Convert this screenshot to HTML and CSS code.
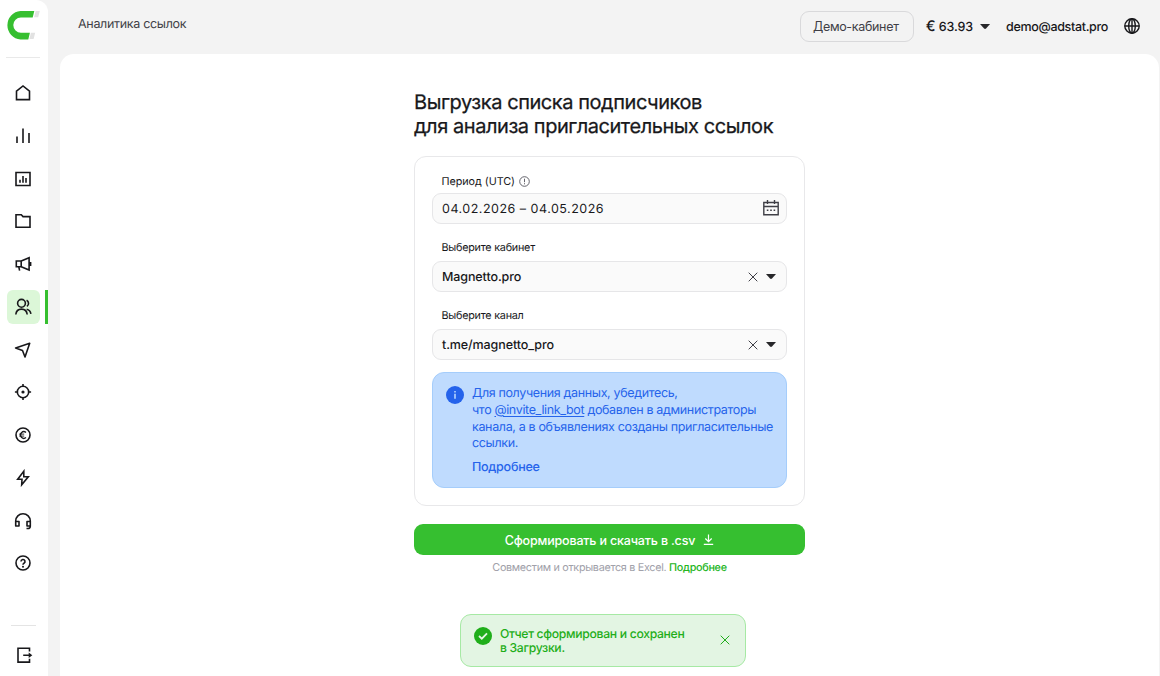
FILE: index.html
```html
<!DOCTYPE html>
<html lang="ru">
<head>
    <meta charset="UTF-8">
    <meta name="viewport" content="width=device-width, initial-scale=1.0">
    <title>Аналитика ссылок</title>
    <link rel="stylesheet" href="styles.css">
</head>
<body>
<div class="layout">
    <aside class="sidebar">
        <a class="logo" href="#">
            <svg width="34" height="29" viewBox="0 0 34 29">
                <path fill="#36bf30" d="M28.3 0H14.5a14.3 14.3 0 0 0 0 28.5h7.8l1.6-6.8h-9a7.6 7.6 0 0 1 0-15.2h11.8z"/>
                <path fill="#e2e2e2" d="M29.6 0h4.2l-1.6 6.2h-4.1zM24.9 21.7h4.3l-1.6 6.3h-4.2z"/>
            </svg>
        </a>
        <nav class="menu">
            <a class="menu-item" href="#">
                <svg viewBox="0 0 18 18"><path d="M2.5 7.2 9 2l6.5 5.2v8.4h-13z"/></svg>
            </a>
            <a class="menu-item" href="#">
                <svg viewBox="0 0 18 18"><path d="M3 9.5v6.6M9 1.5v14.600M15 6v10.100"/></svg>
            </a>
            <a class="menu-item" href="#">
                <svg viewBox="0 0 18 18"><path d="M2 2.5h14v13H2zM6 9.800v3M9 6v6.800M12 8v4.800"/></svg>
            </a>
            <a class="menu-item" href="#">
                <svg viewBox="0 0 18 18"><path d="M2 2.800h5.300l1.700 1.800h7v10.700H2z"/></svg>
            </a>
            <a class="menu-item" href="#">
                <svg viewBox="0 0 18 18"><path d="M2.300 6h4.900v5.800H2.300zM7.200 6l7.900-3.300v12.400l-7.900-3.300M4.800 11.800l.8 3.800M15.100 7.800h1.500v2.400h-1.500"/></svg>
            </a>
            <a class="menu-item active" href="#">
                <svg viewBox="0 0 18 18"><circle cx="7.5" cy="5.3" r="3.9"/><path d="M1.800 16.500c.3-3.400 2.600-5.400 5.700-5.400s5.400 2 5.700 5.400M12.600 2.300a3.500 3.500 0 0 1 .3 6.100M12.700 11.200c2.400.5 3.800 2.300 4.200 4.600"/></svg>
            </a>
            <a class="menu-item" href="#">
                <svg viewBox="0 0 18 18"><path d="M1.600 6.900 15.700 2.200 11 16 8.500 9.500z" stroke-linejoin="round"/></svg>
            </a>
            <a class="menu-item" href="#">
                <svg viewBox="0 0 18 18"><circle cx="9" cy="9" r="5.700"/><path d="M9 .9v3.200M9 13.900v3.200M.9 9h3.200M13.900 9h3.200"/><circle class="dot" cx="9" cy="9" r="1.600"/></svg>
            </a>
            <a class="menu-item" href="#">
                <svg viewBox="0 0 18 18"><circle cx="9" cy="9" r="7"/><path d="M12 6.500A3.300 3.300 0 1 0 12 11.500" stroke-width="1.300"/><path d="M5.200 8.100h5M5.200 10.100h5" stroke-width=".9"/></svg>
            </a>
            <a class="menu-item" href="#">
                <svg viewBox="0 0 18 18"><path d="M9.800 2.200 3.700 10.200H8L7.700 15.800l6.600-8H9.800z"/></svg>
            </a>
            <a class="menu-item" href="#">
                <svg viewBox="0 0 18 18"><path d="M1.700 9.500V9a7.300 7.300 0 0 1 14.600 0v5.200c0 1.400-1 2.300-2.500 2.300h-1.300M1.700 9.500H5v4.500H1.700zM13 9.500h3.300v4.500H13z" stroke-linejoin="round"/></svg>
            </a>
            <a class="menu-item" href="#">
                <svg viewBox="0 0 18 18"><circle cx="9" cy="9" r="7"/><path d="M7 7.500a2 2 0 1 1 3 1.700c-.7.400-1 .7-1 1.500"/><circle class="dot" cx="9" cy="12.700" r="1"/></svg>
            </a>
        </nav>
        <a class="logout" href="#">
            <svg viewBox="0 0 18 18"><path d="M14.500 5.500V2.200H3v13.900h11.500v-3.300M8.200 9.200h7"/><path class="dot" d="M13.700 6.400 17.300 9.200l-3.600 2.800z"/></svg>
        </a>
    </aside>

    <div class="content">
        <header class="topbar">
            <span class="page-name">Аналитика ссылок</span>
            <div class="account">
                <button class="demo-btn">Демо-кабинет</button>
                <span class="balance"><span class="euro">€</span> 63.93</span>
                <i class="caret"></i>
                <span class="email">demo@adstat.pro</span>
                <svg class="globe" viewBox="0 0 18 18"><circle cx="9" cy="9" r="7.200"/><ellipse cx="9" cy="9" rx="3.300" ry="7.200"/><path d="M1.800 9h14.400M9 1.800v14.400"/></svg>
            </div>
        </header>

        <main class="panel">
            <div class="export">
                <h1>Выгрузка списка подписчиков<br>для анализа пригласительных ссылок</h1>

                <section class="card">
                    <label class="label label-period"><span>Период (UTC)</span>
                        <svg width="11" height="11" viewBox="0 0 11 11"><circle cx="5.500" cy="5.500" r="4.800"/><path d="M5.500 2.700v3.500M5.500 7.200v1.100"/></svg>
                    </label>
                    <div class="field">
                        <span class="value date">04.02.2026 – 04.05.2026</span>
                        <svg class="calendar" width="18" height="18" viewBox="0 0 18 18"><path d="M1.800 3.500h14.400v12.300H1.800zM1.800 7.500h14.400M5.500 1v4M12.500 1v4"/><path d="M4.800 11.300h1.600M8.200 11.300h1.600M11.600 11.300h1.600"/></svg>
                    </div>

                    <label class="label">Выберите кабинет</label>
                    <div class="field">
                        <span class="value">Magnetto.pro</span>
                        <svg class="clear" width="10" height="10" viewBox="0 0 10 10"><path d="M.7.700l8.600 8.600M9.300.700L.7 9.300"/></svg>
                        <i class="caret"></i>
                    </div>

                    <label class="label">Выберите канал</label>
                    <div class="field">
                        <span class="value">t.me/magnetto_pro</span>
                        <svg class="clear" width="10" height="10" viewBox="0 0 10 10"><path d="M.7.700l8.600 8.600M9.300.700L.7 9.300"/></svg>
                        <i class="caret"></i>
                    </div>

                    <div class="notice">
                        <svg width="18" height="18" viewBox="0 0 18 18"><circle cx="9" cy="9" r="9" fill="#2563eb"/><path d="M9 7.800v5M9 4.900v1.500" stroke="#bfdbfe" stroke-width="1.500"/></svg>
                        <div>
                            <p>Для получения данных, убедитесь,<br>что <a href="#">@invite_link_bot</a> добавлен в администраторы<br>канала, а в объявлениях созданы пригласительные<br>ссылки.</p>
                            <a class="more" href="#">Подробнее</a>
                        </div>
                    </div>
                </section>

                <button class="submit">
                    <span>Сформировать и скачать в .csv</span>
                    <svg width="11" height="11" viewBox="0 0 11 11"><path d="M5.500.500v7M2.300 4.500l3.200 3.200 3.200-3.200M.8 10.300h9.400"/></svg>
                </button>
                <p class="hint">Совместим и открывается в Excel. <a href="#">Подробнее</a></p>
            </div>
        </main>
    </div>
</div>

<div class="toast">
    <svg width="18" height="18" viewBox="0 0 18 18"><circle cx="9" cy="9" r="9" fill="#1fae1a"/><path d="M5 9l2.800 2.700L13 6.300" stroke="#e3f5e3" stroke-width="1.800"/></svg>
    <p>Отчет сформирован и сохранен<br>в Загрузки.</p>
    <svg class="toast-close" width="10" height="10" viewBox="0 0 10 10"><path d="M.7.700l8.600 8.600M9.300.700L.7 9.300"/></svg>
</div>
</body>
</html>
```
FILE: styles.css
```css
* {
    box-sizing: border-box;
}

body {
    margin: 0;
    font-family: Inter, sans-serif;
    font-size: 12.5px;
    letter-spacing: -.25px;
    text-rendering: geometricPrecision;
    color: #18181b;
    background-color: #f3f3f3;
    overflow: hidden;
}

h1, p {
    margin: 0;
}

a {
    color: inherit;
    text-decoration: none;
}

button {
    font-family: inherit;
    font-size: inherit;
    letter-spacing: inherit;
}

svg {
    display: block;
    flex: none;
    fill: none;
}

.layout {
    display: flex;
    height: 100vh;
}

/* sidebar */
.sidebar {
    display: flex;
    flex-direction: column;
    width: 48px;
    padding: 0 8px 0 6px;
    background-color: #fff;
    border-top-right-radius: 12px;
}

.logo {
    height: 58px;
    padding-top: 11px;
    border-bottom: 1px solid #e9e9e9;
}

.menu {
    display: grid;
    gap: 9.5px;
    padding-top: 18.5px;
}

.menu-item {
    display: flex;
    align-items: center;
    justify-content: center;
    height: 33.25px;
    margin-left: .5px;
    border-radius: 6px;
}

.menu-item svg,
.logout svg {
    width: 18px;
    height: 18px;
    stroke: #18181b;
    stroke-width: 1.6;
}

.menu-item .dot,
.logout .dot {
    fill: #18181b;
    stroke: none;
}

.menu-item.active {
    position: relative;
    background-color: #dcf7d8;
}

.menu-item.active::after {
    content: "";
    position: absolute;
    top: 0;
    bottom: 0;
    right: -8px;
    width: 3px;
    background-color: #36bf30;
}

.logout {
    display: flex;
    justify-content: center;
    margin: auto 4px 0 5px;
    height: 51px;
    padding-top: 20px;
    border-top: 1px solid #e4e4e4;
}

/* top bar */
.content {
    flex: 1;
    display: flex;
    flex-direction: column;
    padding: 0 1px 0 12px;
}

.topbar {
    display: flex;
    justify-content: space-between;
    height: 54px;
    padding: 11px 18px 0;
}

.page-name {
    padding-top: 6px;
    line-height: 16px;
    letter-spacing: -.32px;
    color: #3f3f46;
}

.account {
    display: flex;
    align-items: center;
    height: 31px;
}

.demo-btn {
    width: 114px;
    height: 31px;
    padding: 0 2px 0 0;
    border: 1px solid #d9d9db;
    border-radius: 9px;
    background: none;
    letter-spacing: -.32px;
    color: #3f3f46;
}

.balance {
    margin: 0 7px 0 12px;
    padding-top: 1px;
    font-weight: 500;
    letter-spacing: -.1px;
    white-space: nowrap;
}

.euro {
    font-size: 14.5px;
    line-height: 1;
}

.caret {
    width: 10px;
    height: 5px;
    background-color: #27272a;
    clip-path: polygon(0 0, 100% 0, 60% 92%, 50% 100%, 40% 92%);
}

.email {
    margin: 0 15px 0 16px;
    padding-top: 1px;
    font-weight: 500;
    letter-spacing: -.33px;
}

.globe {
    width: 18px;
    height: 18px;
    margin-bottom: 1px;
    stroke: #18181b;
    stroke-width: 1.4;
}

.panel {
    flex: 1;
    padding: 36px 0 0 354px;
    background-color: #fff;
    border-radius: 14px 14px 0 0;
}

/* export form */
.export {
    width: 391px;
}

h1 {
    font-size: 20px;
    line-height: 24px;
    font-weight: 400;
    letter-spacing: -.44px;
    -webkit-text-stroke: .25px;
    white-space: nowrap;
}

.card {
    height: 350px;
    margin-top: 18px;
    padding: 14px 17px;
    border: 1px solid #e8e8ea;
    border-radius: 12px;
}

.label {
    display: flex;
    align-items: center;
    gap: 4px;
    height: 37px;
    padding: 9px 9px 0 9.5px;
    font-size: 10.8px;
    letter-spacing: -.24px;
}

.label-period {
    height: 22px;
    padding: 0 9px 2px 9.5px;
    letter-spacing: -.05px;
}

.label svg {
    stroke: #52525b;
    stroke-width: .9;
}

.field {
    display: flex;
    align-items: center;
    height: 31px;
    padding: 0 10px 0 9px;
    border: 1px solid #e6e6e8;
    border-radius: 9px;
    background-color: #fafafa;
}

.value {
    margin-right: auto;
    padding-top: 2px;
    font-weight: 500;
    letter-spacing: -.1px;
}

.date {
    font-weight: 400;
    letter-spacing: .5px;
}

.calendar {
    margin: 0 -4px 1px 0;
    stroke: #3f3f46;
    stroke-width: 1.4;
}

.clear {
    margin-right: 8px;
    stroke: #3f3f46;
}

.notice {
    display: flex;
    gap: 8px;
    height: 116px;
    margin-top: 12px;
    padding: 13px 12px 0 13px;
    border: 1px solid #a5cdfb;
    border-radius: 12px;
    background-color: #bfdbfe;
    color: #2563eb;
    letter-spacing: -.35px;
    white-space: nowrap;
}

.notice p {
    line-height: 16.8px;
}

.notice p a {
    text-decoration: underline;
    text-underline-offset: 2px;
}

.notice .more {
    display: block;
    margin-top: 7px;
    line-height: 16px;
    font-weight: 500;
    letter-spacing: -.25px;
}

.submit {
    display: flex;
    align-items: center;
    justify-content: center;
    gap: 8px;
    width: 100%;
    height: 31px;
    margin-top: 18px;
    padding: 1px 0 0;
    border: 0;
    border-radius: 9px;
    background-color: #36bf30;
    color: #fff;
    font-weight: 500;
    letter-spacing: -.17px;
}

.submit svg {
    margin-bottom: 1px;
    stroke: #fff;
    stroke-width: 1.2;
}

.hint {
    margin-top: 5px;
    font-size: 10.8px;
    line-height: 15px;
    letter-spacing: -.3px;
    text-align: center;
    color: #a1a1aa;
}

.hint a {
    color: #24b51e;
    font-weight: 500;
}

/* toast over the page */
.toast {
    position: absolute;
    left: 460px;
    top: 614px;
    display: flex;
    gap: 8px;
    width: 286px;
    height: 53px;
    padding: 12px 15px 0 13px;
    border: 1px solid #a6e9a4;
    border-radius: 11px;
    background-color: #e3f5e3;
    color: #1fae1a;
    font-size: 12.2px;
    line-height: 14.3px;
    font-weight: 500;
    letter-spacing: -.32px;
    white-space: nowrap;
}

.toast-close {
    margin: 8px 0 0 auto;
    stroke: #1fae1a;
}
```
